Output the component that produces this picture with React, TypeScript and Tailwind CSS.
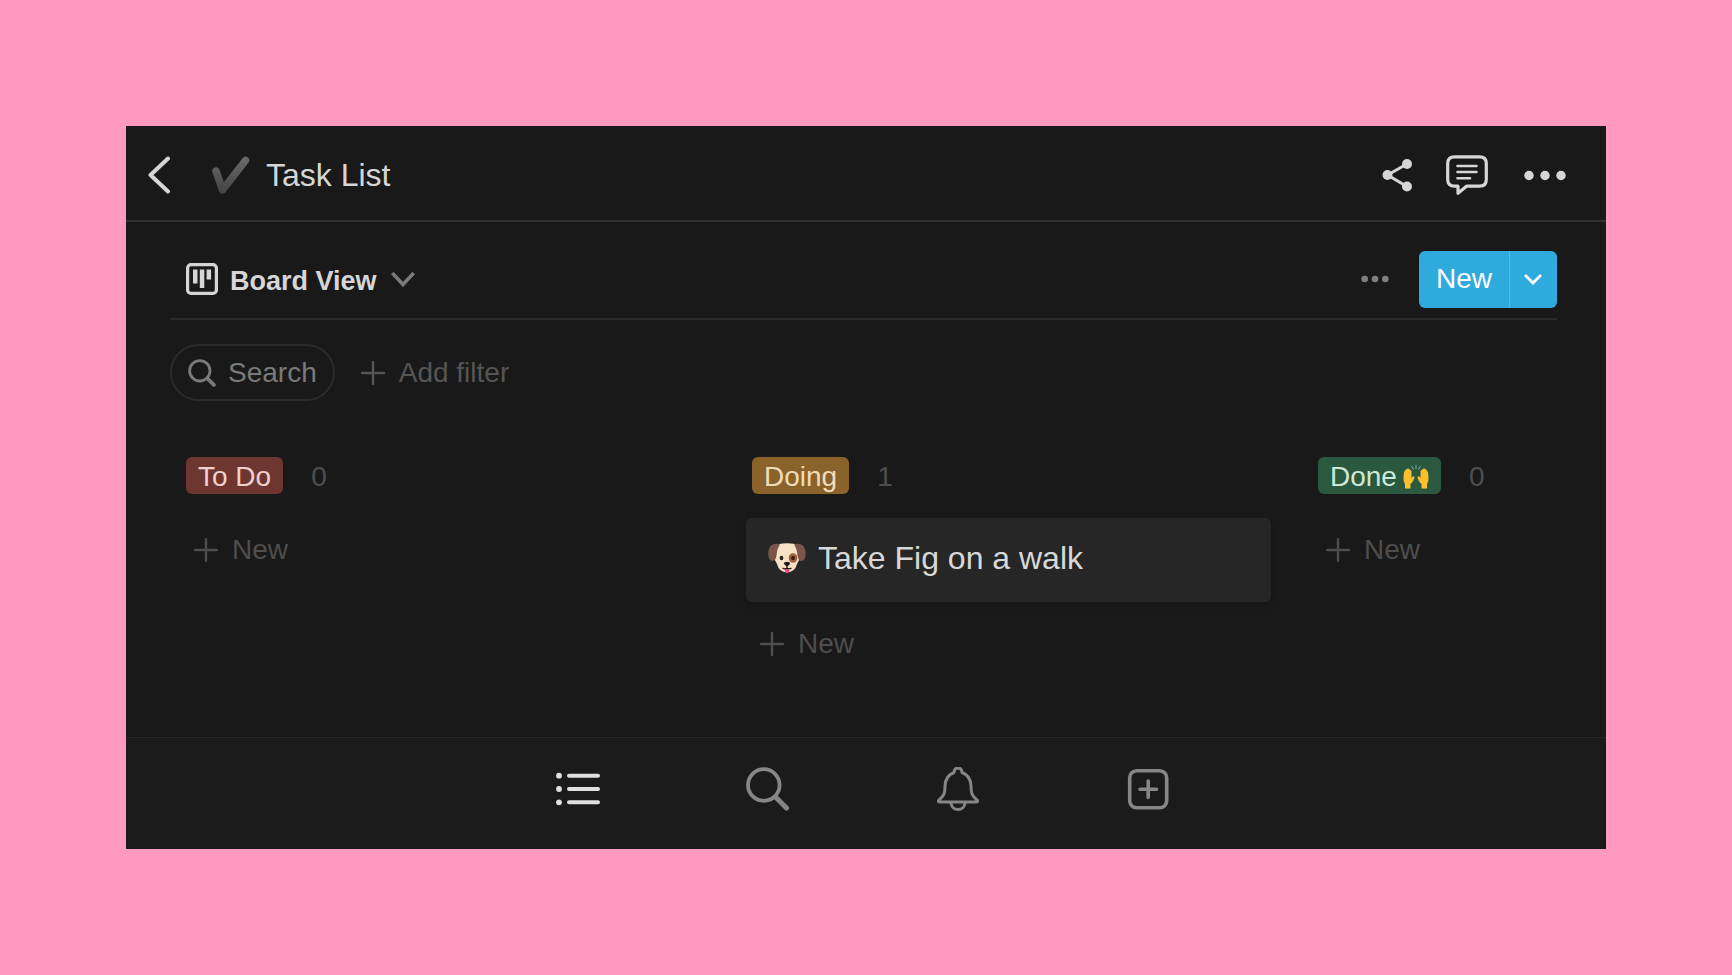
import type { ReactNode } from "react"

const Plus = () => (
    <svg className="size-6 shrink-0" viewBox="0 0 24 24" fill="none" stroke="currentColor" strokeWidth="2.400" strokeLinecap="round" aria-hidden="true">
        <path d="M12 1v22M1 12h22" />
    </svg>
)

const DogIcon = () => (
    <svg className="h-[30px] w-[38px] shrink-0" viewBox="0 0 38 30" role="img" aria-label="Dog">
        <path d="M11 1Q19-.5 27 1L33 12Q31 18 29 21Q27 29 19 29.500Q11 29 9 21Q7 18 5 12Z" fill="#f7e1c6" />
        <path d="M10 1C4 0 .5 4 .3 10C.2 15 2 18 4.500 18C8 18 8.500 13 9 9C9.300 6 11 3 12 1.500Z" fill="#7a564a" />
        <path d="M28 1C34 0 37.500 4 37.700 10C37.800 15 36 18 33.500 18C30 18 29.500 13 29 9C28.700 6 27 3 26 1.500Z" fill="#7a564a" />
        <ellipse cx="25" cy="15" rx="4.300" ry="4.800" fill="#a5603c" />
        <ellipse cx="13.500" cy="15" rx="1.900" ry="2.200" fill="#30221f" />
        <ellipse cx="25" cy="15" rx="1.900" ry="2.200" fill="#30221f" />
        <path d="M16.500 25h5q0 5-2.500 5t-2.500-5" fill="#ea4b8b" />
        <path d="M16 20.500q0-1.800 3-1.800t3 1.800q0 1.500-3 3q-3-1.500-3-3" fill="#1d1718" />
        <path d="M19 23v2q-2 1.500-4.500 0M19 25q2 1.500 4.500 0" fill="none" stroke="#1d1718" strokeWidth="1.200" />
    </svg>
)

const HandsIcon = () => (
    <svg className="h-6 w-[26px] shrink-0" viewBox="0 0 26 24" role="img" aria-label="Raised hands">
        <g fill="#fdbf2d">
            <path d="M2 23.500V19Q0 16 .5 12L1 7.500Q1.500 5.500 2.500 5L4.500 3.500Q6 3 6.500 4.500L7.500 5Q9 6 8.500 8L8.500 13L10.500 11Q12 11.500 11.300 13.500Q10 17 7.500 19V23.500Z" />
            <path d="M24 23.500V19Q26 16 25.500 12L25 7.500Q24.500 5.500 23.500 5L21.500 3.500Q20 3 19.500 4.500L18.500 5Q17 6 17.500 8L17.500 13L15.500 11Q14 11.500 14.700 13.500Q16 17 18.500 19V23.500Z" />
        </g>
        <path d="M13 0v4M8.500 1l2 3.500M17.500 1l-2 3.500" stroke="#7fa9a0" strokeWidth="1" />
    </svg>
)

const AddButton = () => (
    <button className="flex h-16 items-center gap-3.5 pl-3.5 text-[28px] leading-8 text-[#4e4e4e]">
        <Plus />
        New
    </button>
)

type ColumnProps = {
    title: string
    count: number
    tagClass: string
    icon?: ReactNode
    children?: ReactNode
}

const Column = ({ title, count, tagClass, icon, children }: ColumnProps) => {
    return (
        <section className="flex w-[525px] shrink-0 flex-col">
            <div className="flex items-center gap-7 pl-1.5">
                <h2 className={`flex h-[37px] items-center gap-1.5 rounded-md px-3 pt-0.5 text-[28px] leading-8 ${tagClass}`}>
                    {title}
                    {icon}
                </h2>
                <span className="pt-0.5 text-[28px] leading-8 text-[#4e4e4e]">{count}</span>
            </div>
            <div className="mt-6 flex flex-col items-start gap-2.5">
                {children}
                <AddButton />
            </div>
        </section>
    )
}

const Header = () => {
    return (
        <header className="flex h-24 shrink-0 items-center border-b-2 border-[#303030] pt-1 pr-[38px] pl-[22px] text-[#d6d6d6]">
            <button aria-label="Back">
                <svg className="h-[38px] w-6" viewBox="0 0 24 38" fill="none" stroke="currentColor" strokeWidth="4" strokeLinecap="round" strokeLinejoin="round">
                    <path d="M20 2.500L2.500 19L20 35.500" />
                </svg>
            </button>
            <svg className="ml-10 h-[38px] w-[38px]" viewBox="0 0 38 38" fill="none" aria-hidden="true">
                <defs>
                    <linearGradient id="check" x1="0" y1="0" x2="0" y2="1">
                        <stop offset="0" stopColor="#686868" />
                        <stop offset="1" stopColor="#464646" />
                    </linearGradient>
                </defs>
                <path d="M4 15L10.500 34L33.500 4.500" stroke="url(#check)" strokeWidth="7.500" strokeLinecap="round" strokeLinejoin="round" />
            </svg>
            <h1 className="ml-4 text-[32px] leading-9">Task List</h1>
            <div className="ml-auto flex items-center gap-[34px]">
                <button aria-label="Share">
                    <svg className="h-[34px] w-[30px]" viewBox="0 0 30 34" fill="currentColor">
                        <path d="M25 6L5.500 17L25 28.500" fill="none" stroke="currentColor" strokeWidth="3" />
                        <circle cx="5.500" cy="17" r="5" />
                        <circle cx="25" cy="6" r="5" />
                        <circle cx="25" cy="28.500" r="5" />
                    </svg>
                </button>
                <button aria-label="Comments">
                    <svg className="h-10 w-[42px]" viewBox="0 0 42 40" fill="none" stroke="currentColor" strokeWidth="3.200" strokeLinecap="round" strokeLinejoin="round">
                        <path d="M8.500 1.800H33.500Q40.300 1.800 40.300 8.500V24.500Q40.300 31.200 33.500 31.200H20.500L12 38.300V31.200H8.500Q1.700 31.200 1.700 24.500V8.500Q1.700 1.800 8.500 1.800Z" />
                        <path d="M11.500 11H30.500M11.500 17H30.500M11.500 23.200H24" strokeWidth="2.600" />
                    </svg>
                </button>
                <button aria-label="More">
                    <svg className="h-10 w-[46px]" viewBox="0 0 46 40" fill="currentColor">
                        <circle cx="7" cy="20.500" r="4.700" />
                        <circle cx="23" cy="20.500" r="4.700" />
                        <circle cx="39" cy="20.500" r="4.700" />
                    </svg>
                </button>
            </div>
        </header>
    )
}

const Toolbar = () => {
    return (
        <div className="mr-[49px] ml-11 flex h-[98px] shrink-0 items-center border-b-2 border-[#2b2b2b] pt-[18px]">
            <button className="ml-4 flex items-center text-[27px] leading-8 font-bold text-[#d6d6d6]">
                <svg className="size-8" viewBox="0 0 32 32" fill="none" aria-hidden="true">
                    <rect x="1.600" y="1.600" width="28.800" height="28.800" rx="3.500" stroke="currentColor" strokeWidth="3.200" />
                    <path d="M7 6.500h4.500v14H7zM13.800 6.500h4.500v18.500h-4.500zM20.600 6.500h4.500v10h-4.500z" fill="currentColor" />
                </svg>
                <span className="ml-3 pt-1">Board View</span>
                <svg className="ml-3.5 h-4 w-6 text-[#7a7a7a]" viewBox="0 0 24 16" fill="none" stroke="currentColor" strokeWidth="3.600" aria-hidden="true">
                    <path d="M1.200 2L12 13.500L22.800 2" />
                </svg>
            </button>
            <button aria-label="View options" className="mr-[30px] ml-auto text-[#7f7f7f]">
                <svg className="h-2 w-7" viewBox="0 0 28 8" fill="currentColor">
                    <circle cx="3.700" cy="4" r="3.300" />
                    <circle cx="14" cy="4" r="3.300" />
                    <circle cx="24.300" cy="4" r="3.300" />
                </svg>
            </button>
            <div className="flex h-[57px] overflow-hidden rounded-md bg-[#2eaadc] text-white">
                <button className="w-[91px] border-r border-[#58bce3] text-[28px] leading-8">New</button>
                <button aria-label="New from template" className="flex w-[47px] items-center justify-center pr-0.5">
                    <svg className="h-3 w-[18px]" viewBox="0 0 18 12" fill="none" stroke="currentColor" strokeWidth="2.800">
                        <path d="M1 2L9 10L17 2" />
                    </svg>
                </button>
            </div>
        </div>
    )
}

const Filters = () => {
    return (
        <div className="mt-6 flex items-center pl-11 text-[28px] leading-8">
            <button className="flex h-[57px] items-center gap-3 rounded-full border-2 border-[#2b2b2b] px-4 text-[#7a7a7a]">
                <svg className="size-7" viewBox="0 0 28 28" fill="none" stroke="currentColor" strokeLinecap="round" aria-hidden="true">
                    <circle cx="11.800" cy="11.800" r="10.200" strokeWidth="2.800" />
                    <path d="M19.500 19.500L25.800 25.800" strokeWidth="3.800" />
                </svg>
                Search
            </button>
            <button className="ml-[26px] flex items-center gap-3.5 text-[#555555]">
                <Plus />
                Add filter
            </button>
        </div>
    )
}

const BottomNav = () => {
    return (
        <nav className="flex h-[112px] shrink-0 items-center justify-center gap-[146px] border-t border-[#262626] bg-[#1b1b1b] pr-1.5 pb-2.5 text-[#868686]">
            <button aria-label="Pages" className="text-[#e0e0e0]">
                <svg className="size-11" viewBox="0 0 44 44" fill="currentColor">
                    <circle cx="3" cy="8.700" r="2.900" />
                    <circle cx="3" cy="22" r="2.900" />
                    <circle cx="3" cy="35.300" r="2.900" />
                    <path d="M13 8.700H42M13 22H42M13 35.300H42" stroke="currentColor" strokeWidth="4" strokeLinecap="round" />
                </svg>
            </button>
            <button aria-label="Search">
                <svg className="size-11" viewBox="0 0 44 44" fill="none" stroke="currentColor" strokeLinecap="round">
                    <circle cx="17.800" cy="18" r="15.800" strokeWidth="3.800" />
                    <path d="M30 30.500L40.500 41" strokeWidth="5" />
                </svg>
            </button>
            <button aria-label="Notifications">
                <svg className="size-11" viewBox="0 0 44 44" fill="none" stroke="currentColor" strokeWidth="3" strokeLinecap="round" strokeLinejoin="round">
                    <path d="M18 5.500C18.500 -.5 25.500 -.5 26 5.500Q34.500 8.500 35 19C35.200 27 36 28.500 41 33Q42.500 35 40.500 35H3.500Q1.500 35 3 33C8 28.500 8.800 27 9 19Q9.500 8.500 18 5.500Z" />
                    <path d="M15 36C15.500 44.500 28.500 44.500 29 36" />
                </svg>
            </button>
            <button aria-label="Add page">
                <svg className="size-11" viewBox="0 0 44 44" fill="none" stroke="currentColor" strokeWidth="3.600" strokeLinecap="round">
                    <rect x="3.700" y="3.700" width="37" height="37" rx="7" />
                    <path d="M22.200 14V30.500M14 22.200H30.500" />
                </svg>
            </button>
        </nav>
    )
}

const App = () => {
    return (
        <div className="flex min-h-screen flex-col bg-[#ff99c0] p-[126px] font-['Liberation_Sans',Arial,sans-serif]">
            <div className="flex flex-1 flex-col overflow-hidden bg-[#191919]">
                <Header />
                <main className="flex flex-1 flex-col">
                    <Toolbar />
                    <Filters />
                    <div className="mt-14 flex flex-1 gap-[41px] overflow-hidden pl-[54px]">
                        <Column title="To Do" count={0} tagClass="bg-[#6e3630] text-[#f0d0cc]" />
                        <Column title="Doing" count={1} tagClass="bg-[#89632a] text-[#f0dcb8]">
                            <a href="#" className="flex h-[84px] w-full items-center gap-3 rounded-md bg-[#262626] px-[22px] pb-1 text-[32px] leading-9 text-[#d8d8d8] shadow-md">
                                <DogIcon />
                                Take Fig on a walk
                            </a>
                        </Column>
                        <Column title="Done" count={0} tagClass="bg-[#2b593f] text-[#cfe8d8]" icon={<HandsIcon />} />
                    </div>
                </main>
                <BottomNav />
            </div>
        </div>
    )
}

export default App
